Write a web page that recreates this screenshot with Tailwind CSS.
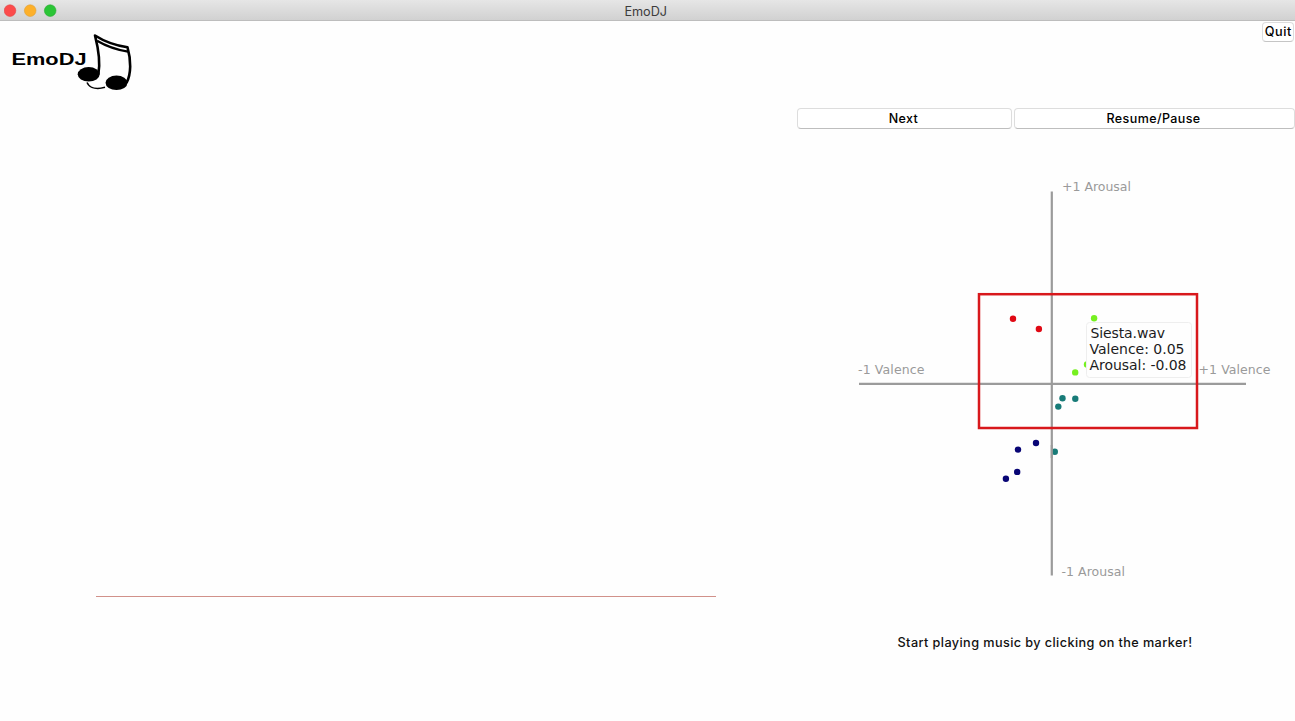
<!DOCTYPE html>
<html lang="en">
<head>
<meta charset="utf-8">
<title>EmoDJ</title>
<script src="https://cdn.jsdelivr.net/npm/@tailwindcss/browser@4"></script>
</head>
<body class="flex h-screen flex-col overflow-hidden bg-[#fefefe] font-['Inter','Liberation_Sans',sans-serif] text-[13px] text-black">
  <header class="grid h-[21px] shrink-0 grid-cols-[1fr_auto_1fr] items-center border-b border-[#bdbdbd] bg-linear-to-b from-[#e6e6e6] to-[#d1d1d1] pl-1">
    <svg class="h-[21px] w-14" viewBox="4 0 56 21">
      <circle cx="10" cy="10.6" r="5.8" fill="#fc4b4b" stroke="#e04343" stroke-width=".6"/>
      <circle cx="30.2" cy="10.6" r="5.8" fill="#fdb02a" stroke="#dfa033" stroke-width=".6"/>
      <circle cx="50.2" cy="10.6" r="5.8" fill="#2bc536" stroke="#27a930" stroke-width=".6"/>
    </svg>
    <h1 class="pr-[7px]"><svg class="h-[21px] w-11" viewBox="0 0 44 21"><text x="0.5" y="15.500" font-size="12.700" textLength="42.500" fill="#3c3c3c">EmoDJ</text></svg></h1>
    <span></span>
  </header>
  <main class="flex min-h-0 flex-1 pt-px">
    <section class="flex w-[797px] shrink-0 flex-col">
      <svg class="h-[78px] w-[140px]" viewBox="0 22 140 78" aria-label="EmoDJ">
        <text x="11.5" y="65" font-family="Liberation Sans, Arial, sans-serif" font-weight="700" font-size="16.500" textLength="75" lengthAdjust="spacingAndGlyphs">EmoDJ</text>
        <g fill="none" stroke="#000" stroke-linejoin="round">
          <path d="M98.4 74C100.600 62 98.200 48 95 35.500Q109 44.500 127.500 47.300C131.200 60 131.300 74 126.500 83" stroke-width="2.600"/>
          <path d="M97 40.800Q111 49 128 51.700" stroke-width="2.200"/>
          <path d="M87 82.500C90 89 98 89.300 105 87.300" stroke-width="1.600"/>
        </g>
        <ellipse cx="88.700" cy="74.300" rx="11" ry="7.200"/>
        <ellipse cx="116.500" cy="82.800" rx="11" ry="7.200"/>
      </svg>
      <div class="mt-[496px] ml-24 h-px w-[620px] bg-[#d1918a]"></div>
    </section>
    <section class="flex flex-1 flex-col">
      <div class="flex h-[86px] justify-end pr-px">
        <button class="h-5 w-8 rounded-[4px] border border-[#dddddd] border-b-[#c5c5c5] bg-white"><svg class="h-[18px] w-[30px]" viewBox="0 0 30 18"><text x="1.700" y="13.200" font-size="12.700" font-weight="450" textLength="26.700">Quit</text></svg></button>
      </div>
      <div class="flex gap-[2.500px]">
        <button class="flex h-[21px] w-[214.500px] justify-center rounded-[4px] border border-[#dddddd] border-b-[#bebebe] bg-white"><svg class="h-[19px] w-[100px]" viewBox="0 0 100 19"><text x="34.800" y="14" font-size="12.500" font-weight="450" textLength="29">Next</text></svg></button>
        <button class="flex h-[21px] w-[280.500px] justify-center rounded-[4px] border border-[#dddddd] border-b-[#bebebe] bg-white"><svg class="h-[19px] w-[100px]" viewBox="0 0 100 19"><text x="2.500" y="14" font-size="12.500" font-weight="450" textLength="93.700">Resume/Pause</text></svg></button>
      </div>
      <svg class="h-[471px] w-[498px] shrink-0" viewBox="797 129 498 471" font-family="DejaVu Sans, sans-serif">
        <g stroke="#9b9b9b" stroke-width="2.200">
          <path d="M1051.800 191.500V575.500M859 383.900H1246"/>
        </g>
        <g fill="#9a9a9a" font-size="12.500">
          <text x="1062" y="191" textLength="69">+1 Arousal</text>
          <text x="1061.500" y="576" textLength="63.500">-1 Arousal</text>
          <text x="858" y="374" textLength="66.500">-1 Valence</text>
          <text x="1198.500" y="374" textLength="72">+1 Valence</text>
        </g>
        <g fill="#e00914"><circle cx="1013" cy="318.800" r="3.200"/><circle cx="1038.900" cy="329" r="3.200"/></g>
        <g fill="#76f020"><circle cx="1094.100" cy="318.200" r="3.200"/><circle cx="1075.200" cy="372.400" r="3.200"/><circle cx="1087" cy="364.500" r="3.200"/></g>
        <g fill="#187b78"><circle cx="1062.500" cy="398.200" r="3.200"/><circle cx="1075.300" cy="398.800" r="3.200"/><circle cx="1058.300" cy="406.600" r="3.200"/><circle cx="1054.800" cy="451.800" r="3.200"/></g>
        <path d="M1051.800 445V458" stroke="#9b9b9b" stroke-width="2.200"/>
        <g fill="#080575"><circle cx="1036" cy="443" r="3.200"/><circle cx="1018" cy="449.600" r="3.200"/><circle cx="1017.200" cy="471.900" r="3.200"/><circle cx="1005.900" cy="478.800" r="3.200"/></g>
        <rect x="979" y="294.200" width="218" height="133.800" fill="none" stroke="#d8181c" stroke-width="2.500"/>
        <rect x="1086.500" y="322.500" width="105" height="55" rx="3" fill="#fefefe" stroke="#eeeeee"/>
        <g fill="#1c1c1c" font-size="14">
          <text x="1090.500" y="338.300" textLength="74.500">Siesta.wav</text>
          <text x="1089.500" y="354.300" textLength="95">Valence: 0.05</text>
          <text x="1089.500" y="370.300" textLength="97">Arousal: -0.08</text>
        </g>
      </svg>
      <svg class="mt-[30px] h-6 w-[498px] shrink-0" viewBox="797 630 498 24"><text x="897.500" y="647" font-size="12.700" font-weight="450" textLength="294.500" fill="#111">Start playing music by clicking on the marker!</text></svg>
    </section>
  </main>
</body>
</html>
